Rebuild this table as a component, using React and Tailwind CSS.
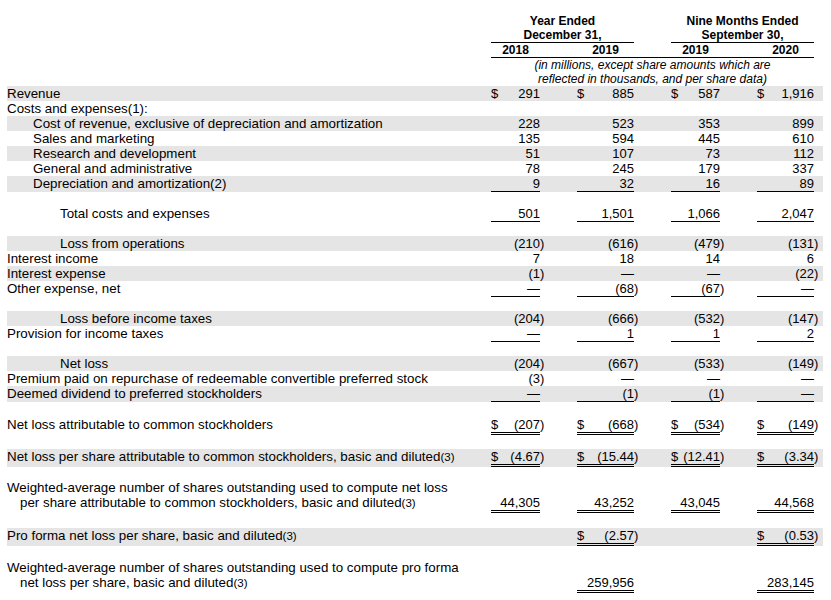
import React from 'react';

const W = ['w-[49px]', 'w-[57px]', 'w-[49px]', 'w-[57px]'];
const GAP = ['w-[37px]', 'w-[37px]', 'w-[37px]', 'w-[9px]'];

// line: 0 none, 1 single, 2 double
const LINE = {
  0: { on: '', off: '', pad: '' },
  1: { on: 'border-b border-black', off: 'border-b border-transparent', pad: 'pb-px' },
  2: { on: 'border-b-[3px] border-double border-black', off: 'border-b-[3px] border-transparent', pad: 'pb-[3px]' },
};

const Fn = ({ n }) => <span className="text-[11.5px] leading-none">({n})</span>;

// value string: leading '$' means dollar sign, trailing ')' is hung outside
const parse = (v) => {
  if (v == null) return null;
  let dollar = false;
  let s = v;
  if (s.startsWith('$')) {
    dollar = true;
    s = s.slice(1).trim();
  }
  const paren = s.endsWith(')');
  if (paren) s = s.slice(0, -1);
  return { dollar, num: s, paren };
};

const rows = [
  { label: 'Revenue', gray: true, vals: ['$291', '$885', '$587', '$1,916'] },
  { label: <>Costs and expenses(1):</> },
  { label: 'Cost of revenue, exclusive of depreciation and amortization', indent: 1, gray: true, vals: ['228', '523', '353', '899'] },
  { label: 'Sales and marketing', indent: 1, vals: ['135', '594', '445', '610'] },
  { label: 'Research and development', indent: 1, gray: true, vals: ['51', '107', '73', '112'] },
  { label: 'General and administrative', indent: 1, vals: ['78', '245', '179', '337'] },
  { label: 'Depreciation and amortization(2)', indent: 1, gray: true, vals: ['9', '32', '16', '89'], line: 1 },
  { space: 14 },
  { label: 'Total costs and expenses', indent: 2, vals: ['501', '1,501', '1,066', '2,047'], line: 1 },
  { space: 14 },
  { label: 'Loss from operations', indent: 2, gray: true, vals: ['(210)', '(616)', '(479)', '(131)'] },
  { label: 'Interest income', vals: ['7', '18', '14', '6'] },
  { label: 'Interest expense', gray: true, vals: ['(1)', '—', '—', '(22)'] },
  { label: 'Other expense, net', vals: ['—', '(68)', '(67)', '—'], line: 1 },
  { space: 14 },
  { label: 'Loss before income taxes', indent: 2, gray: true, vals: ['(204)', '(666)', '(532)', '(147)'] },
  { label: 'Provision for income taxes', vals: ['—', '1', '1', '2'], line: 1 },
  { space: 14 },
  { label: 'Net loss', indent: 2, gray: true, vals: ['(204)', '(667)', '(533)', '(149)'] },
  { label: 'Premium paid on repurchase of redeemable convertible preferred stock', vals: ['(3)', '—', '—', '—'] },
  { label: 'Deemed dividend to preferred stockholders', gray: true, vals: ['—', '(1)', '(1)', '—'], line: 1 },
  { space: 15 },
  { label: 'Net loss attributable to common stockholders', vals: ['$(207)', '$(668)', '$(534)', '$(149)'], line: 2 },
  { space: 14 },
  { label: <>Net loss per share attributable to common stockholders, basic and diluted<Fn n={3} /></>, gray: true, vals: ['$(4.67)', '$(15.44)', '$(12.41)', '$(3.34)'], line: 2 },
  { space: 13 },
  {
    label: 'Weighted-average number of shares outstanding used to compute net loss',
    cont: <>per share attributable to common stockholders, basic and diluted<Fn n={3} /></>,
    vals: ['44,305', '43,252', '43,045', '44,568'],
    line: 2,
  },
  { space: 15 },
  { label: <>Pro forma net loss per share, basic and diluted<Fn n={3} /></>, gray: true, vals: [null, '$(2.57)', null, '$(0.53)'], line: 2 },
  { space: 14 },
  {
    label: 'Weighted-average number of shares outstanding used to compute pro forma',
    cont: <>net loss per share, basic and diluted<Fn n={3} /></>,
    vals: [null, '259,956', null, '283,145'],
    line: 2,
  },
];

const INDENT = ['', 'pl-[26px]', 'pl-[53px]'];

function Row({ r }) {
  const ln = LINE[r.line || 0];
  const vals = r.vals || [null, null, null, null];
  return (
    <div className={`flex ${r.gray ? 'bg-[#e5e5e5]' : ''}`}>
      <div className={`w-[484px] shrink-0 whitespace-nowrap text-[13.33px] ${INDENT[r.indent || 0]} ${ln.pad}`}>
        <div>{r.label}</div>
        {r.cont && <div className="pl-[13px]">{r.cont}</div>}
      </div>
      {vals.map((v, i) => {
        const p = parse(v);
        return (
          <React.Fragment key={i}>
            <div className={`${W[i]} shrink-0 flex items-end justify-between whitespace-nowrap ${p ? ln.on : ln.off}`}>
              <span>{p && p.dollar ? '$' : ''}</span>
              <span>{p ? p.num : ''}</span>
            </div>
            <div className={`${GAP[i]} shrink-0 flex items-end ${ln.off}`}>
              <span>{p && p.paren ? ')' : ''}</span>
            </div>
          </React.Fragment>
        );
      })}
    </div>
  );
}

export default function App() {
  return (
    <div className="w-[831px] h-[600px] bg-white text-black overflow-hidden pl-[7px] pt-[14px] font-['Liberation_Sans',Arial,sans-serif] text-[13px] leading-[15px]">
      <div className="w-[816px]">
        {/* column headers */}
        <div className="flex">
          <div className="w-[484px] shrink-0" />
          <div className="w-[323px] shrink-0 text-[12px] leading-[14px]">
            <div className="flex font-bold text-center">
              <div className="w-[143px] border-b border-black">Year Ended<br />December 31,</div>
              <div className="w-[37px]" />
              <div className="w-[143px] border-b border-black">Nine Months Ended<br />September 30,</div>
            </div>
            <div className="flex font-bold text-center border-b border-black">
              <div className="w-[49px]">2018</div>
              <div className="w-[37px]" />
              <div className="w-[57px]">2019</div>
              <div className="w-[37px]" />
              <div className="w-[49px]">2019</div>
              <div className="w-[37px]" />
              <div className="w-[57px]">2020</div>
            </div>
            <div className="italic text-center">
              (in millions, except share amounts which are<br />
              reflected in thousands, and per share data)
            </div>
          </div>
        </div>

        {rows.map((r, i) =>
          r.space ? (
            <div key={i} className={r.space === 13 ? 'h-[13px]' : r.space === 15 ? 'h-[15px]' : 'h-[14px]'} />
          ) : (
            <Row key={i} r={r} />
          )
        )}
      </div>
    </div>
  );
}
